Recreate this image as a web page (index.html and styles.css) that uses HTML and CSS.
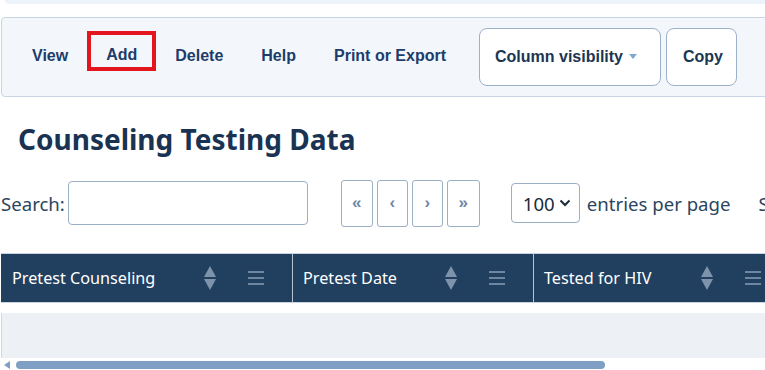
FILE: index.html
```html
<!DOCTYPE html>
<html lang="en">
<head>
  <meta charset="UTF-8" />
  <meta name="viewport" content="width=device-width, initial-scale=1.0"/>
  <title>Counseling Testing Data</title>
  <link rel="stylesheet" href="styles.css">
</head>
<body>
  <div class="topstrip"></div>

  <!-- Toolbar -->
  <div class="toolbar">
    <a class="tool-link" href="#">View</a>
    <a class="tool-link active" href="#">Add</a>
    <a class="tool-link" href="#">Delete</a>
    <a class="tool-link" href="#">Help</a>
    <a class="tool-link" href="#">Print or Export</a>
    <button class="tool-btn colvis">Column visibility <span class="caret"></span></button>
    <button class="tool-btn copy">Copy</button>
  </div>

  <h1 class="page-title">Counseling Testing Data</h1>

  <div class="dt-controls">
    <label class="search">Search:<input type="text" class="search-input"></label>
    <div class="pager">
      <button class="page-btn first">&laquo;</button>
      <button class="page-btn">&lsaquo;</button>
      <button class="page-btn">&rsaquo;</button>
      <button class="page-btn last">&raquo;</button>
    </div>
    <div class="length">
      <span class="select">100
        <svg width="12" height="8" viewBox="0 0 12 8"><path d="M1.5 1.5 6 6l4.5-4.5" fill="none" stroke="#1b2a3a" stroke-width="2"/></svg>
      </span>
      <span class="length-label">entries per page</span>
    </div>
    <span class="info">Showing 1 to 1 of 1 entries</span>
  </div>

  <div class="dt-wrap">
    <div class="dt-head">
      <div class="th col1">
        <span class="th-text">Pretest Counseling</span>
        <svg class="sort" width="12" height="24" viewBox="0 0 12 24"><polygon points="6,0 12,11 0,11"/><polygon points="0,13 12,13 6,24"/></svg>
        <span class="menu"><i></i><i></i><i></i></span>
      </div>
      <div class="th col2">
        <span class="th-text">Pretest Date</span>
        <svg class="sort" width="12" height="24" viewBox="0 0 12 24"><polygon points="6,0 12,11 0,11"/><polygon points="0,13 12,13 6,24"/></svg>
        <span class="menu"><i></i><i></i><i></i></span>
      </div>
      <div class="th col3">
        <span class="th-text">Tested for HIV</span>
        <svg class="sort" width="12" height="24" viewBox="0 0 12 24"><polygon points="6,0 12,11 0,11"/><polygon points="0,13 12,13 6,24"/></svg>
        <span class="menu"><i></i><i></i><i></i></span>
      </div>
    </div>
    <div class="dt-row"></div>
    <div class="scrollbar">
      <span class="scroll-arrow"></span>
      <span class="scroll-thumb"></span>
    </div>
  </div>
</body>
</html>
```

FILE: styles.css
```css
body {
  margin: 0;
  background: #fff;
  font-family: 'Noto Sans', 'Open Sans', sans-serif;
  color: #1b3552;
  overflow: hidden;
  width: 765px;
  height: 370px;
}
.topstrip {
  height: 4px;
  margin-left: 5px;
  background: #edf3fa;
  border-bottom-left-radius: 6px;
}
.toolbar {
  display: flex;
  align-items: center;
  margin: 13px 0 0 1px;
  height: 78px;
  width: 800px;
  padding-left: 11px;
  background: #f3f6fb;
  border: 1px solid #c8d5e5;
  border-radius: 4px;
}
.tool-link {
  font-family: 'Liberation Sans', Arial, sans-serif;
  font-size: 16px;
  font-weight: 700;
  color: #1c3d6b;
  text-decoration: none;
  padding: 0 19px;
  line-height: 34px;
  margin-bottom: 3px;
}
.tool-link.active {
  align-self: flex-start;
  margin: 13px 0 0;
  border: 4px solid #e3161d;
  padding: 7px 15px 0;
  line-height: 25px;
}
.tool-btn {
  font-family: 'Liberation Sans', Arial, sans-serif;
  font-size: 16px;
  font-weight: 700;
  color: #1b3552;
  background: #fff;
  border: 1px solid #9cb0c8;
  border-radius: 8px;
  height: 58px;
  padding: 0 15px;
  cursor: pointer;
}
.colvis {
  margin-left: 14px;
  width: 182px;
  text-align: left;
}
.copy {
  margin-left: 5px;
  width: 71px;
  padding: 0 16px;
}
.caret {
  display: inline-block;
  margin-left: 2px;
  vertical-align: 3px;
  border-left: 4px solid transparent;
  border-right: 4px solid transparent;
  border-top: 5px solid #7fa8d0;
}
.page-title {
  margin: 24px 0 0 18px;
  font-size: 28px;
  font-weight: 700;
  line-height: 36px;
  color: #1a3352;
}
.dt-controls {
  display: flex;
  align-items: center;
  margin-top: 22px;
  height: 48px;
  white-space: nowrap;
}
.search {
  display: flex;
  align-items: center;
  font-size: 18.6px;
  color: #2c4560;
  padding-left: 1px;
}
.search-input {
  margin-left: 3px;
  width: 240px;
  height: 44px;
  box-sizing: border-box;
  border: 1px solid #9aaec6;
  border-radius: 4px;
}
.pager {
  display: flex;
  gap: 4px;
  margin-left: 33px;
}
.page-btn {
  width: 31px;
  height: 47px;
  background: #fff;
  border: 1px solid #9aaec6;
  border-radius: 3px;
  color: #6c87a8;
  font-family: 'Liberation Sans', Arial, sans-serif;
  font-size: 17px;
  font-weight: 700;
  padding: 0;
}
.page-btn.first { width: 32px; }
.page-btn.last { width: 33px; }
.length {
  display: flex;
  align-items: center;
  margin-left: 31px;
}
.select {
  display: flex;
  align-items: center;
  justify-content: space-between;
  box-sizing: border-box;
  width: 69px;
  height: 40px;
  padding: 0 8px 0 11px;
  border: 1px solid #9aaec6;
  border-radius: 4px;
  font-size: 18.6px;
  color: #1b2a3a;
}
.length-label {
  margin-left: 7px;
  font-size: 18.6px;
  color: #2c4560;
}
.info {
  margin-left: 28px;
  font-size: 18.6px;
  color: #2c4560;
}
.dt-wrap {
  margin-top: 26px;
  width: 765px;
}
.dt-head {
  display: flex;
  height: 48px;
  border-top: 1px solid #c9d4e0;
  border-bottom: 1px solid #c9d4e0;
  background: #21405f;
  margin-left: 1px;
}
.th {
  flex-shrink: 0;
  display: flex;
  align-items: center;
  box-sizing: border-box;
  padding-left: 11px;
  color: #fff;
  font-size: 16.2px;
}
.col1 { width: 291px; }
.col2 { width: 241px; border-left: 1px solid #b8c4d2; padding-left: 10px; }
.col3 { width: 256px; border-left: 1px solid #b8c4d2; padding-left: 10px; }
.th-text {
  flex: 1;
}
.sort {
  margin-right: 32px;
  fill: #7d93ab;
}
.menu {
  display: flex;
  flex-direction: column;
  gap: 4px;
  width: 16px;
  margin-right: 28px;
}
.menu i {
  display: block;
  height: 2px;
  background: #6f86a0;
}
.dt-row {
  margin-top: 10px;
  height: 45px;
  margin-left: 1px;
  background: #edf0f5;
  border-left: 1px solid #d0d8e2;
}
.scrollbar {
  display: flex;
  align-items: center;
  height: 10px;
  margin-top: 2px;
}
.scroll-arrow {
  margin-left: 4px;
  border-top: 4px solid transparent;
  border-bottom: 4px solid transparent;
  border-right: 6px solid #7fa0c4;
}
.scroll-thumb {
  margin-left: 6px;
  width: 589px;
  height: 8px;
  border-radius: 4px;
  background: #7fa0c4;
}
```
